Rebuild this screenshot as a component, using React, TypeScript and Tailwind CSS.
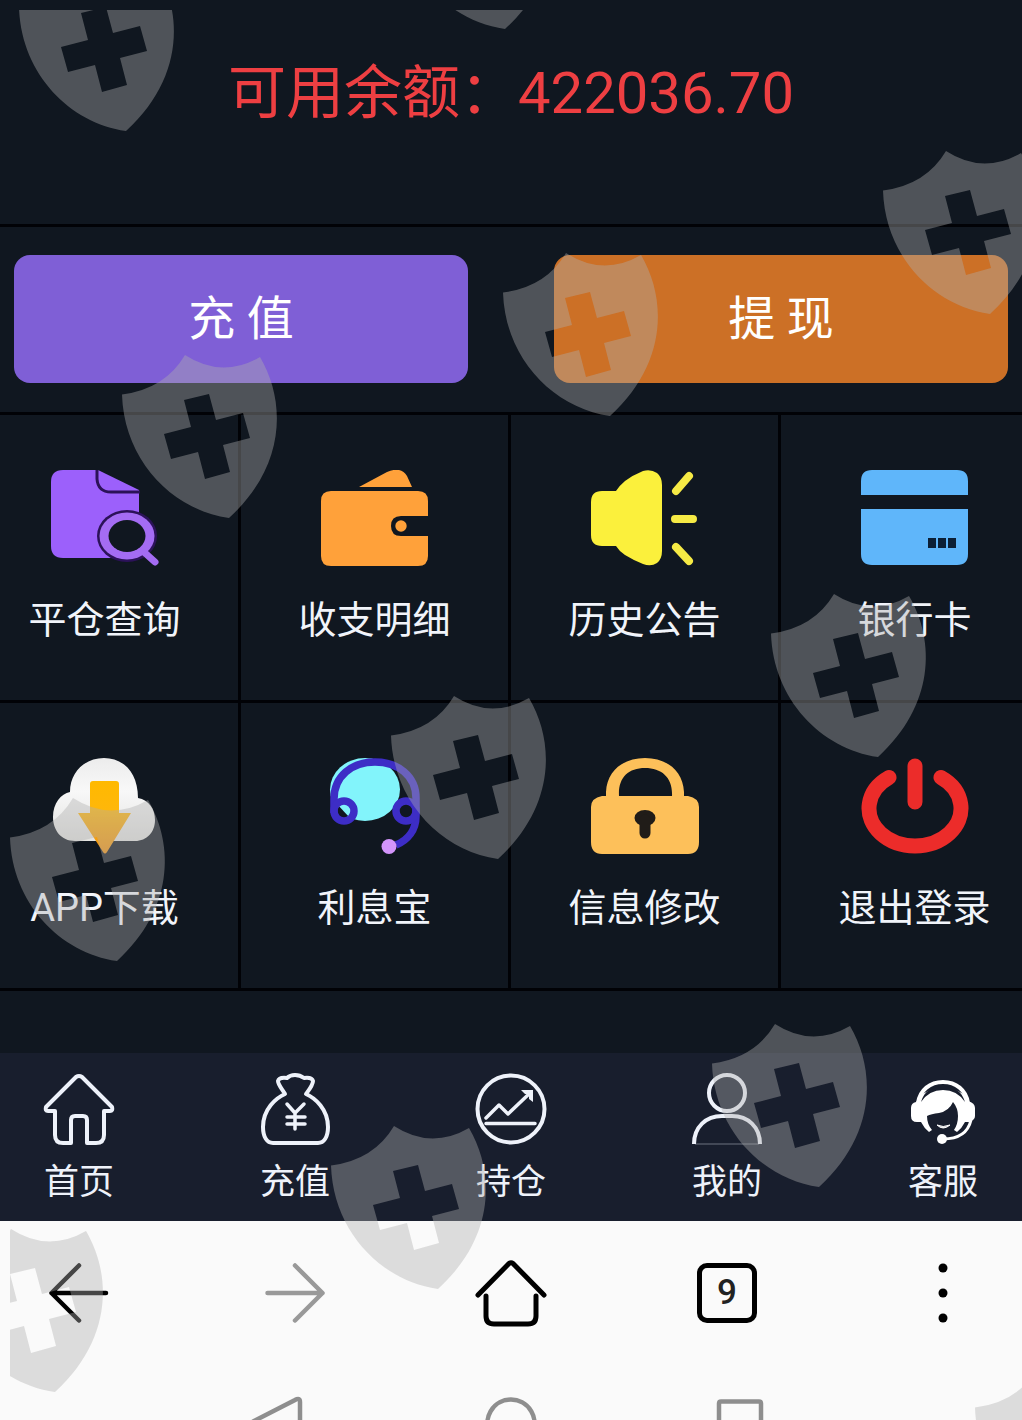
import clsx from "clsx";

/** Props shared by all the icon components */
interface IconProps {
  /** Additional CSS classes */
  className?: string;
}

/**
 * Entry of the menu grid and of the tab bar
 */
interface MenuItem {
  label: string;
  icon: (props: IconProps) => React.ReactElement;
}

function QueryIcon({ className }: IconProps) {
  return (
    <svg viewBox="0 0 108 96" className={className} aria-hidden="true">
      <path
        d="M12 0H47L88 20V88H12Q0 88 0 76V12Q0 0 12 0Z"
        fill="#9c60fb"
      />
      <path
        d="M46 0V9Q47 22 60 22H89"
        fill="none"
        stroke="#2c1259"
        strokeWidth="3"
      />
      <ellipse cx="76" cy="66" rx="30" ry="26" fill="#2c1259" />
      <ellipse cx="76" cy="66" rx="27.500" ry="23.500" fill="#a46cf3" />
      <ellipse cx="76" cy="66" rx="18.500" ry="16" fill="#101720" />
      <path
        d="M94 83L104 92"
        stroke="#a46cf3"
        strokeWidth="7"
        strokeLinecap="round"
      />
    </svg>
  );
}

function WalletIcon({ className }: IconProps) {
  return (
    <svg viewBox="0 0 108 96" className={className} aria-hidden="true">
      <path
        d="M38 17L66 2Q80-4 86 6L91 17ZM10 21H97Q107 21 107 31V46H80Q70 46 70 56T80 66H107V86Q107 96 97 96H10Q0 96 0 86V31Q0 21 10 21Z"
        fill="#ffa13a"
      />
      <circle cx="80" cy="56" r="5.700" fill="#ffa13a" />
    </svg>
  );
}

function SpeakerIcon({ className }: IconProps) {
  return (
    <svg viewBox="0 0 108 96" className={className} aria-hidden="true">
      <path
        d="M11 21H25Q28 16 34 11Q42 5 52 1Q60-1 66 3Q71 7 71 15V81Q71 89 66 93Q60 97 52 94Q42 90 34 85Q28 81 25 76H11Q0 76 0 65V32Q0 21 11 21Z"
        fill="#fbf03c"
      />
      <path
        d="M98 6L85 21M84 49H102M85 77L98 91"
        stroke="#f6ea45"
        strokeWidth="8"
        strokeLinecap="round"
      />
    </svg>
  );
}

function CardIcon({ className }: IconProps) {
  return (
    <svg viewBox="0 0 108 96" className={className} aria-hidden="true">
      <path
        d="M11 0H96Q107 0 107 11V25H0V11Q0 0 11 0ZM0 39H107V84Q107 95 96 95H11Q0 95 0 84Z"
        fill="#5fb6fa"
      />
      <path d="M67 68h8v10h-8zM77 68h8v10h-8zM87 68h8v10h-8z" fill="#0c2036" />
    </svg>
  );
}

function CloudIcon({ className }: IconProps) {
  return (
    <svg viewBox="0 0 108 96" className={className} aria-hidden="true">
      <defs>
        <linearGradient id="cloud" x1="0" y1="0" x2="0" y2="1">
          <stop offset="0" stopColor="#ececec" />
          <stop offset="0.4" stopColor="#f8f8f8" />
          <stop offset="1" stopColor="#e2e2df" />
        </linearGradient>
        <linearGradient id="arrow" x1="0" y1="0" x2="0" y2="1">
          <stop offset="0" stopColor="#ffb900" />
          <stop offset="0.4" stopColor="#ffb70a" />
          <stop offset="1" stopColor="#ef9012" />
        </linearGradient>
      </defs>
      <path
        d="M24 83C10 83 2 72 2 59C2 45 10 36 19 34C19 14 34 0 53 0S87 14 87 40C98 42 104 51 104 62C104 74 96 83 84 83Z"
        fill="url(#cloud)"
      />
      <path
        d="M42 23H65Q68 23 68 26V55H80L56 94Q54 97 52 94L27 55H39V26Q39 23 42 23Z"
        fill="url(#arrow)"
      />
    </svg>
  );
}

function HeadsetIcon({ className }: IconProps) {
  return (
    <svg viewBox="0 0 108 96" className={className} aria-hidden="true">
      <ellipse cx="44" cy="31.500" rx="35" ry="31.500" fill="#82f4fb" />
      <circle cx="22" cy="53" r="7" fill="#101720" />
      <path d="M15 45L29 60V46L20 44Z" fill="#82f4fb" />
      <g fill="none" stroke="#3d2dc6" strokeWidth="7.500">
        <path d="M13 55V41C13 18 31 4 54 4S95 18 95 40V58C95 72 87 82 75 87" />
        <circle cx="23" cy="53" r="10" />
        <circle cx="85" cy="53" r="10" />
      </g>
      <circle cx="68" cy="88.500" r="7.500" fill="#d395fb" />
    </svg>
  );
}

function LockIcon({ className }: IconProps) {
  return (
    <svg viewBox="0 0 108 96" className={className} aria-hidden="true">
      <path
        d="M15 38V34C16 12 33 0 54 0S92 12 93 34V38H97Q108 40 108 49V84Q108 96 97 96H11Q0 96 0 84V49Q0 40 11 38ZM28 38H81C82 20 71 10 54 10S27 20 28 38Z"
        fill="#fdc05a"
        fillRule="evenodd"
      />
      <ellipse cx="54" cy="60" rx="10.500" ry="8" fill="#201c18" />
      <path
        d="M54 62V75"
        stroke="#201c18"
        strokeWidth="11"
        strokeLinecap="round"
      />
    </svg>
  );
}

function PowerIcon({ className }: IconProps) {
  return (
    <svg viewBox="0 0 108 96" className={className} aria-hidden="true">
      <path
        d="M54 8V44M28 19.500A46 37.500 0 1 0 80 19.500"
        fill="none"
        stroke="#ec2c2a"
        strokeWidth="15"
        strokeLinecap="round"
      />
    </svg>
  );
}

function HouseIcon({ className }: IconProps) {
  return (
    <svg
      viewBox="0 0 72 72"
      className={className}
      fill="none"
      stroke="currentColor"
      strokeWidth="4"
      strokeLinejoin="round"
      aria-hidden="true"
    >
      <path d="M33 4Q36 2 39 4L69 34Q70 38 67 38H61V62Q61 70 53 70H44V47Q44 43 40 43H32Q28 43 28 47V70H20Q12 70 12 62V38H5Q2 38 3 34Z" />
    </svg>
  );
}

function MoneyBagIcon({ className }: IconProps) {
  return (
    <svg
      viewBox="0 0 72 72"
      className={className}
      fill="none"
      stroke="currentColor"
      strokeWidth="4"
      strokeLinecap="round"
      strokeLinejoin="round"
      aria-hidden="true"
    >
      <path d="M26 21C17 25 4 36 4 54C4 64 8 70 14 70H59C65 70 69 64 69 54C69 36 56 25 47 21C50 17 54 12 54 8Q53 4 45 5Q41 2 36 2T28 5Q20 4 19 8C19 12 24 17 26 21Z" />
      <path
        d="M28 31L36 40L45 31M36 40V56M28 44H46M28 51H46"
        strokeWidth="3.500"
      />
    </svg>
  );
}

function ChartIcon({ className }: IconProps) {
  return (
    <svg
      viewBox="0 0 72 72"
      className={className}
      fill="none"
      stroke="currentColor"
      strokeWidth="3.500"
      aria-hidden="true"
    >
      <circle cx="36" cy="36" r="33.500" strokeWidth="4" />
      <path
        d="M11 45L24 32L33 41L55 20M11 50.500H60"
        strokeLinecap="round"
        strokeLinejoin="round"
      />
      <path d="M46 17H58V29L54 26V21H50Z" fill="currentColor" stroke="none" />
    </svg>
  );
}

function UserIcon({ className }: IconProps) {
  return (
    <svg
      viewBox="0 0 72 72"
      className={className}
      fill="none"
      stroke="currentColor"
      strokeWidth="4"
      aria-hidden="true"
    >
      <circle cx="36" cy="20" r="18" />
      <path d="M3 71C3 54 15 43 31 43H41C57 43 69 54 69 71" />
      <path d="M4 71H68" strokeWidth="1" opacity="0.4" />
    </svg>
  );
}

function ServiceIcon({ className }: IconProps) {
  return (
    <svg viewBox="0 0 72 72" className={className} aria-hidden="true">
      <path
        d="M11 30C13 17 23 9 36 9S59 17 61 30"
        fill="none"
        stroke="#fff"
        strokeWidth="4"
      />
      <path
        d="M9 29Q4 30 4 35V43Q4 49 10 49H14Q17 55 22 59L25 57Q20 51 20 43Q24 41 32 40Q42 38 46 29Q51 35 51 43Q51 51 47 57L50 59Q55 55 58 49H62Q68 47 68 43V35Q68 30 61 28C58 20 48 15 36 15S14 20 9 29Z"
        fill="#fff"
      />
      <path
        d="M14 29C17 18 26 13 36 13S55 18 58 29Q50 17 36 17T14 29Z"
        fill="#181e2d"
      />
      <path d="M30 52Q36 58 43 52Q36 55 30 52Z" fill="#fff" stroke="#fff" />
      <path
        d="M64 47C61 60 51 66 36 66"
        fill="none"
        stroke="#fff"
        strokeWidth="3"
      />
      <circle cx="35" cy="66" r="5" fill="#fff" />
    </svg>
  );
}

const MENU: MenuItem[] = [
  { label: "平仓查询", icon: QueryIcon },
  { label: "收支明细", icon: WalletIcon },
  { label: "历史公告", icon: SpeakerIcon },
  { label: "银行卡", icon: CardIcon },
  { label: "APP下载", icon: CloudIcon },
  { label: "利息宝", icon: HeadsetIcon },
  { label: "信息修改", icon: LockIcon },
  { label: "退出登录", icon: PowerIcon },
];

const TABS: MenuItem[] = [
  { label: "首页", icon: HouseIcon },
  { label: "充值", icon: MoneyBagIcon },
  { label: "持仓", icon: ChartIcon },
  { label: "我的", icon: UserIcon },
  { label: "客服", icon: ServiceIcon },
];

// Top left corner of each shield, measured inside the watermark layer
const SHIELDS = [
  [9, -42],
  [388, -144],
  [112, 345],
  [493, 243],
  [873, 141],
  [0, 788],
  [381, 686],
  [761, 584],
  [-62, 1219],
  [321, 1116],
  [702, 1014],
  [965, 1358],
];

/**
 * Translucent shields laid over the whole screen
 */
function Watermark() {
  return (
    <svg
      className="pointer-events-none absolute top-2.5 left-2.5 h-full w-full overflow-hidden"
      aria-hidden="true"
    >
      <defs>
        <path
          id="shield"
          fillRule="evenodd"
          d="M0 39.500Q43 34 63 0Q100 24 138 2C165 48 163 112 107 163C50 155 2 105 0 39.500ZM62 45L69 72L42 79L49 104L76 97L83 124L108 117L101 90L128 83L121 58L94 65L87 39Z"
        />
      </defs>
      <g fill="#b0b0b0" fillOpacity="0.4">
        {SHIELDS.map(([x, y]) => (
          <use key={`${x},${y}`} href="#shield" x={x} y={y} />
        ))}
      </g>
    </svg>
  );
}

function ActionButton({
  label,
  className,
}: {
  label: string;
  className: string;
}) {
  return (
    <button
      type="button"
      className={clsx(
        "h-32 flex-1 rounded-2xl text-[47px] text-white",
        className,
      )}
    >
      {label}
    </button>
  );
}

function MenuGrid() {
  return (
    <nav className="-mx-[29px] grid grid-cols-4">
      {MENU.map(({ label, icon: Icon }) => (
        <a
          key={label}
          href="#"
          className="flex flex-col items-center gap-[26px] border-r-[3px] border-b-[3px] border-[#010206] pt-[55px] pb-[52px] text-[38px] leading-[56px] text-[#f1f4fa]"
        >
          <Icon className="h-24 w-[108px]" />
          {label}
        </a>
      ))}
    </nav>
  );
}

function TabBar() {
  return (
    <nav className="bg-[#181e2d]">
      <div className="-mx-[29px] grid grid-cols-5 pt-5 pb-3">
        {TABS.map(({ label, icon: Icon }) => (
          <a
            key={label}
            href="#"
            className="flex flex-col items-center gap-3 text-[35px] leading-[52px] text-[#eef2fa]"
          >
            <Icon className="size-[72px]" />
            {label}
          </a>
        ))}
      </div>
    </nav>
  );
}

function BrowserBar() {
  return (
    <div className="-mx-[29px] grid h-36 shrink-0 grid-cols-5 place-items-center text-black">
      <button type="button" aria-label="Back">
        <svg
          viewBox="0 0 60 60"
          className="size-[60px]"
          fill="none"
          stroke="currentColor"
          strokeWidth="4.500"
          strokeLinecap="round"
          strokeLinejoin="round"
        >
          <path d="M57 30H2.500L30 2.500M2.500 30L30 57.500" />
        </svg>
      </button>
      <button type="button" aria-label="Forward" className="text-[#999]">
        <svg
          viewBox="0 0 60 60"
          className="size-[60px]"
          fill="none"
          stroke="currentColor"
          strokeWidth="4.500"
          strokeLinecap="round"
          strokeLinejoin="round"
        >
          <path d="M2.500 30H57.500L30 2.500M57.500 30L30 57.500" />
        </svg>
      </button>
      <button type="button" aria-label="Home">
        <svg
          viewBox="0 0 72 72"
          className="size-[72px]"
          fill="none"
          stroke="currentColor"
          strokeWidth="5"
          strokeLinecap="round"
          strokeLinejoin="round"
        >
          <path d="M3 38L34 6.500Q36 5 38 6.500L69 38M11 39V59Q11 67 19 67H53Q61 67 61 59V39" />
        </svg>
      </button>
      <button
        type="button"
        aria-label="Tabs"
        className="size-[60px] rounded-[10px] border-[5px] border-black text-[35px] leading-[50px] font-medium text-[#222]"
      >
        9
      </button>
      <button type="button" aria-label="More">
        <svg viewBox="0 0 60 60" className="size-[60px]" fill="currentColor">
          <circle cx="30" cy="5" r="4.500" />
          <circle cx="30" cy="30" r="4.500" />
          <circle cx="30" cy="55" r="4.500" />
        </svg>
      </button>
    </div>
  );
}

function SystemBar() {
  return (
    <div className="flex justify-center pt-8">
      {[
        "M41 3Q46 0 46 5V47Q46 52 41 49L0 28Q-4 26 0 24Z",
        "M27 2.500A23.500 23.500 0 1 1 26.900 2.500Z",
        "M7 4.500H45Q47 4.500 47 6.500V46Q47 48 45 48H7Q5 48 5 46V6.500Q5 4.500 7 4.500Z",
      ].map((d) => (
        <div key={d} className="flex w-[230px] justify-center">
          <svg
            viewBox="0 0 54 54"
            className="size-[54px] overflow-visible"
            fill="none"
            stroke="#8e8e8e"
            strokeWidth="4.500"
          >
            <path d={d} />
          </svg>
        </div>
      ))}
    </div>
  );
}

export default function App() {
  return (
    <div className="relative flex h-screen flex-col overflow-hidden bg-[#fafafa] font-['Roboto','Noto_Sans_CJK_SC',sans-serif]">
      <main className="bg-[#101720] pb-[62px]">
        <h1 className="border-b-[3px] border-[#010206] pt-[53px] pb-[91px] text-center text-[58px] leading-[80px] text-[#ee3f42]">
          可用余额：422036.70
        </h1>
        <div className="flex gap-[86px] border-b-[3px] border-[#010206] px-3.5 pt-7 pb-[29px]">
          <ActionButton label="充 值" className="bg-[#7f5fd6]" />
          <ActionButton label="提 现" className="bg-[#cc7026]" />
        </div>
        <MenuGrid />
      </main>
      <TabBar />
      <BrowserBar />
      <SystemBar />
      <Watermark />
    </div>
  );
}
